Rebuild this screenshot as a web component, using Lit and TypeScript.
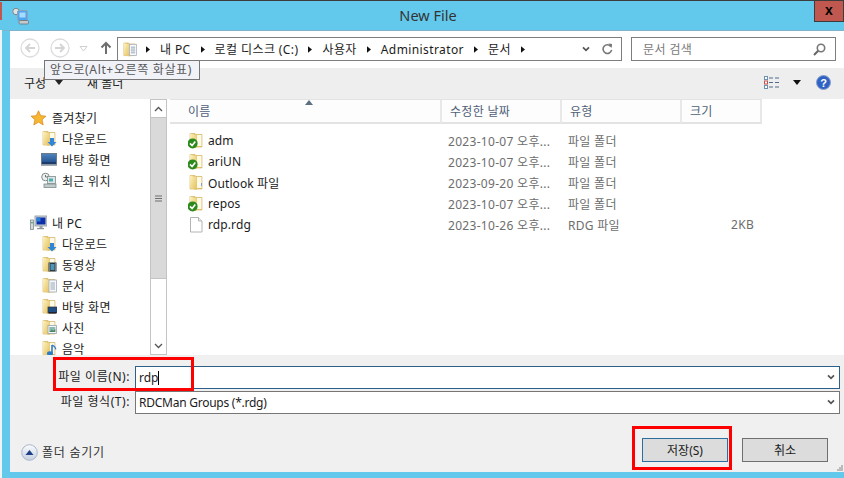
import { LitElement, html, css, svg } from "lit";
import { customElement } from "lit/decorators.js";

const folderBase = svg`
  <defs><linearGradient id="fg" x1="0" y1="0" x2="1" y2="1">
    <stop offset="0" stop-color="#fdf3c0"/><stop offset="1" stop-color="#e3bf5c"/></linearGradient></defs>
  <path d="M2 1.500h5l1 1h6v12.500H2z" fill="#e6c872" stroke="#cfae5c" stroke-width=".6"/>
  <rect x="9" y="3" width="4.500" height="11" fill="#fffbe8"/>
  <path d="M2 1.500l6.500 2V16L2 14.500z" fill="url(#fg)"/>
`;

const overlays: Record<string, unknown> = {
  plain: svg`<rect x="13" y="9" width="1" height="3" fill="#6aa7e0"/>`,
  check: svg`<circle cx="4.600" cy="11.400" r="5" fill="#2c8a1c"/><path d="M2 11.400l2.100 2.200 3.200-4" fill="none" stroke="#fff" stroke-width="1.600"/>`,
  down: svg`<path d="M9 8h4v4h2.500L11 16.500 6.500 12H9z" fill="#2f86d8"/>`,
  film: svg`<rect x="7.500" y="6.500" width="8" height="9" fill="#2b3a44"/><rect x="9.500" y="8" width="4" height="6" fill="#4f93b8"/><path d="M8 8h1M8 10h1M8 12h1M8 14h1M14 8h1M14 10h1M14 12h1M14 14h1" stroke="#e8e8e8" stroke-width=".8"/>`,
  doc: svg`<rect x="8" y="3" width="7.500" height="12" fill="#f6f8fb" stroke="#a5adb5" stroke-width=".8"/><path d="M9.500 6h4.500M9.500 8h4.500M9.500 10h4.500M9.500 12h4.500" stroke="#7e93a8" stroke-width=".8"/>`,
  desk: svg`<rect x="7" y="9" width="9" height="6" fill="#1e4e86" stroke="#333" stroke-width=".7"/><rect x="8" y="14" width="7" height="1.500" fill="#223"/>`,
  pic: svg`<rect x="7" y="6.500" width="8.500" height="8" fill="#f4f6f7" stroke="#9aa4a8" stroke-width=".8"/><rect x="8.300" y="8" width="6" height="5" fill="#8cb9b0"/><path d="M8.300 13l2.500-2.500 1.500 1.200 2-1.700V13z" fill="#4f8a66"/>`,
  music: svg`<path d="M11 5v8.200" stroke="#2a7cc7" stroke-width="1.600"/><path d="M11 5c2 1 3.800 2.400 3.800 4.600" fill="none" stroke="#2a7cc7" stroke-width="1.200"/><ellipse cx="9" cy="13.500" rx="3" ry="2.300" fill="#2a7cc7"/>`,
};

const folder = (o: string) => html`<svg class="ic" viewBox="0 0 16 17">${folderBase}${overlays[o]}</svg>`;

const star = html`<svg class="ic lg" viewBox="0 0 16 16"><path d="M8 .8l2.200 4.900 5.200.5-3.900 3.500 1.200 5.200L8 12.100l-4.700 2.800 1.200-5.200L.6 6.200l5.200-.5z" fill="#f7b731" stroke="#d98a1c" stroke-width=".8"/></svg>`;
const desktop = html`<svg class="ic" viewBox="0 0 16 16"><defs><linearGradient id="dg" x1="0" y1="0" x2="0" y2="1"><stop offset="0" stop-color="#4f86c0"/><stop offset="1" stop-color="#1d4a88"/></linearGradient></defs><rect x=".5" y="2" width="15" height="10.500" fill="url(#dg)" stroke="#6d7a88"/><rect x="1" y="10.800" width="14" height="1.500" fill="#16335f"/><rect x="0" y="12.800" width="16" height="1.400" fill="#7b8794"/></svg>`;
const recent = html`<svg class="ic" viewBox="0 0 16 16"><circle cx="4.500" cy="4.500" r="3.800" fill="#eef0f0" stroke="#7d8a8c"/><path d="M4.500 2.500v2h1.800" fill="none" stroke="#555" stroke-width=".8"/><rect x="6.500" y="4" width="8" height="7" fill="#dfe5e6" stroke="#7d8a8c" stroke-width=".8"/><rect x="8" y="6" width="4" height="3" fill="#4ab1ac"/><rect x="3" y="11.500" width="12" height="3.500" fill="#c3cacb" stroke="#7d8a8c" stroke-width=".8"/></svg>`;
const pc = html`<svg class="ic lg" viewBox="0 0 17 16"><rect x="5" y="1" width="12" height="10" fill="#cfd6da" stroke="#8b9498" stroke-width=".8"/><rect x="6.500" y="2.500" width="9" height="7" fill="#0f2fa8"/><rect x="6.500" y="2.500" width="4" height="4" fill="#2b7fd8"/><rect x="9.500" y="11" width="3" height="2" fill="#9aa2a6"/><rect x="7" y="13" width="7" height="1.200" fill="#8b9498"/><rect x=".5" y="5" width="3" height="9.500" fill="#d5dadb" stroke="#818a8d" stroke-width=".8"/><rect x="1.300" y="7" width="1.400" height="1.400" fill="#37a24a"/></svg>`;
const fileIc = html`<svg class="ic" viewBox="0 0 16 17"><path d="M2.500 1.500h8l3.500 3.500v11H2.500z" fill="#fff" stroke="#b4b4b4"/><path d="M10.500 1.500V5H14" fill="#f0f0f0" stroke="#b4b4b4"/></svg>`;
const chevDown = html`<svg class="chev" viewBox="0 0 9 7"><path d="M1 1.500l3.500 3.500L8 1.500" fill="none" stroke="#555" stroke-width="2"/></svg>`;
const triR = html`<svg class="tri" viewBox="0 0 5 8"><path d="M0 0l5 4-5 4z" fill="#111"/></svg>`;
const navCircle = (flip: boolean) => html`<svg class="${flip ? "navc fwd" : "navc"}" viewBox="0 0 20 20"><circle cx="10" cy="10" r="9" fill="#fff" stroke="#dcdcdc" stroke-width="1.300"/><path d="${flip ? "M5 10h8M10 6l4 4-4 4" : "M15 10H7M10 6l-4 4 4 4"}" fill="none" stroke="#d4d4d4" stroke-width="1.800"/></svg>`;

const favs = [["down", "다운로드"], ["desk", "바탕 화면"]];
const pcs = [["down", "다운로드"], ["film", "동영상"], ["doc", "문서"], ["desk", "바탕 화면"], ["pic", "사진"], ["music", "음악"]];
const files = [
  ["check", "adm", "2023-10-07 오후...", "파일 폴더", ""],
  ["check", "ariUN", "2023-10-07 오후...", "파일 폴더", ""],
  ["plain", "Outlook 파일", "2023-09-20 오후...", "파일 폴더", ""],
  ["check", "repos", "2023-10-07 오후...", "파일 폴더", ""],
  ["file", "rdp.rdg", "2023-10-26 오후...", "RDG 파일", "2KB"],
];

@customElement("app-root")
export class AppRoot extends LitElement {
  static styles = css`
    :host { display: block; width: 844px; height: 478px; position: relative; overflow: hidden; background: #63c9ec;
      font: 12px "Noto Sans", "Noto Sans CJK KR", sans-serif; color: #1b1b1b; }
    * { box-sizing: border-box; }
    svg { display: block; flex: none; }
    .edge { position: absolute; left: 0; top: 30px; bottom: 0; width: 2px; background: #eef3f5; }
    .edgeRed { position: absolute; left: 0; top: 2px; height: 18px; width: 2px; background: #c0584f; }
    .title { height: 31px; display: grid; grid-template-columns: 1fr auto 1fr; padding-left: 12px; border-top: 1px solid #3c3c3c; border-bottom: 1px solid #7fb4cc; }
    .appic { width: 17px; height: 17px; margin-top: 7px; }
    .caption { font-size: 14.5px; line-height: 29px; color: #333; }
    .close { justify-self: end; width: 30px; height: 21px; background: #c0584f; border: 1px solid #3c3c3c; border-top: 0; color: #000; font: bold 14px/18px "Liberation Sans", sans-serif; text-align: center; }
    .body { margin-left: 10px; height: 441px; background: #fff; display: flex; flex-direction: column; }
    .nav { height: 37px; display: flex; align-items: flex-start; padding: 6px 8px 0 10px; }
    .navc { width: 20px; height: 20px; margin-top: 1px; }
    .navc.fwd { margin-left: 10px; }
    .drop { width: 9px; height: 6px; margin: 9px 0 0 9px; }
    .up { width: 12px; height: 14px; margin: 4px 0 0 12px; }
    .addr { margin-left: 5px; width: 505px; height: 24px; border: 1px solid #7e7e7e; display: flex; align-items: center; padding: 0 8px 0 4px; }
    .addr .crumb { display: flex; align-items: center; gap: 10px; margin-left: 9px; white-space: nowrap; letter-spacing: .4px; }
    .addr .spacer { flex: 1; }
    .addr .ic { width: 15px; height: 17px; }
    .tri { width: 4px; height: 7px; }
    .chev { width: 8px; height: 6px; }
    .refresh { width: 11px; height: 12px; margin-left: 12px; }
    .search { margin-left: 9px; width: 205px; height: 24px; border: 1px solid #7e7e7e; display: flex; align-items: center; justify-content: space-between; padding: 0 9px 0 11px; color: #7a7a7a; letter-spacing: .4px; white-space: nowrap; }
    .search svg { width: 13px; height: 13px; }
    .cmd { height: 31px; background: #eee; display: flex; align-items: center; padding: 0 13px 2px 14px; }
    .cmd .cfg { width: 63px; display: flex; align-items: center; gap: 9px; }
    .cmd .cfg svg { width: 8px; height: 5px; }
    .cmd .gap { flex: 1; }
    .cmd .views { width: 16px; height: 13px; }
    .cmd .viewdrop { width: 8px; height: 5px; margin: 0 15px 0 13px; }
    .cmd .help { width: 15px; height: 15px; }
    .main { height: 256px; display: flex; overflow: hidden; }
    .tree { width: 140px; padding-top: 8px; }
    .row { height: 21px; display: flex; align-items: center; white-space: nowrap; letter-spacing: .3px; }
    .row.top { padding-left: 20px; gap: 5px; }
    .row.sub { padding-left: 31px; gap: 5px; }
    .row.blank { height: 21px; }
    .ic { width: 16px; height: 17px; }
    .ic.lg { width: 17px; height: 16px; }
    .sb { width: 17px; display: flex; flex-direction: column; border: 1px solid #c4c4c4; }
    .sb .btn { height: 17px; display: flex; align-items: center; justify-content: center; }
    .sb .btn svg { width: 9px; height: 6px; }
    .sb .thumb { height: 162px; background: #d9d9d9; border: solid #c4c4c4; border-width: 1px 0; display: flex; align-items: center; justify-content: center; }
    .sb .thumb svg { width: 7px; height: 7px; }
    .sb .track { flex: 1; }
    .list { flex: 1; padding-left: 3px; }
    .head { width: 592px; height: 25px; display: grid; grid-template-columns: 272px 120px 120px 80px; position: relative; border: solid #e3e3e3; border-width: 1px 0 2px; background: #fdfdfd; color: #4d6078; letter-spacing: .3px; }
    .head span { line-height: 23px; padding-left: 8px; border-right: 2px solid #e8e8e8; }
    .head span:first-child { padding-left: 18px; }
    .sort { position: absolute; left: 135px; top: 0; width: 8px; height: 5px; }
    .rows { padding-top: 6px; }
    .file { height: 21px; display: grid; grid-template-columns: 271px 120px 120px 73px; align-items: center; width: 592px; color: #6d6d6d; letter-spacing: .3px; }
    .file .name { display: flex; align-items: center; gap: 4px; padding-left: 18px; color: #1b1b1b; letter-spacing: .1px; }
    .file .date { padding-left: 7px; }
    .file .type { padding-left: 7px; }
    .file .size { text-align: right; }
    .bottom { flex: 1; background: #f0f0f0; display: flex; flex-direction: column; padding: 10px 4px 0 0; position: relative; }
    .field { display: grid; grid-template-columns: 125px 1fr; align-items: center; height: 23px; margin-bottom: 2px; }
    .field label { text-align: right; padding-right: 5px; letter-spacing: .55px; line-height: 24px; }
    .box { height: 23px; background: #fff; border: 1px solid #767676; display: flex; align-items: center; justify-content: space-between; padding: 0 4px 0 3px; }
    .box.act { border-color: #2c6088; }
    .box .tx { letter-spacing: -.25px; }
    .box .caret { display: inline-block; width: 1px; height: 14px; background: #000; vertical-align: -3px; }
    .foot { flex: 1; display: flex; align-items: flex-start; justify-content: space-between; padding: 23px 12px 0 11px; }
    .hide { display: flex; align-items: center; gap: 4px; margin-top: 5px; letter-spacing: .75px; color: #333; }
    .hide svg { width: 17px; height: 17px; }
    .btns { display: flex; gap: 14px; }
    button { width: 86px; height: 24px; background: #dcdcdc; border: 1px solid #707070; font: inherit; color: #1b1b1b; padding: 0; }
    button.def { border-color: #2c6f9f; }
    .grip { position: absolute; right: 1px; bottom: 1px; width: 6px; height: 6px; }
    .tooltip { position: absolute; left: 44px; top: 60px; width: 156px; height: 20px; background: #f1f2f7; border: 1px solid #767676; color: #575757; line-height: 17px; padding-left: 5px; letter-spacing: .65px; white-space: nowrap; }
    .mark { position: absolute; border: 3px solid #f00; }
    .mark.a { left: 53px; top: 357px; width: 141px; height: 34px; }
    .mark.b { left: 632px; top: 426px; width: 100px; height: 44px; }
  `;

  render() {
    return html`
      <div class="edge"></div>
      <div class="edgeRed"></div>
      <div class="title">
        <svg class="appic" viewBox="0 0 17 17">
          <circle cx="4" cy="3.500" r="3.200" fill="#dfe3e6" stroke="#7d8488"/>
          <rect x="5.500" y="2.500" width="10" height="10" rx="1.500" fill="#4ea6f0" stroke="#8fa3b5"/>
          <rect x="7.500" y="4.500" width="6" height="5" fill="#a8dcff"/>
          <rect x="7" y="12.500" width="9.500" height="3.500" rx="1.200" fill="#c4cbd0" stroke="#60686e" stroke-width=".7"/>
        </svg>
        <div class="caption">New File</div>
        <div class="close">x</div>
      </div>
      <div class="body">
        <div class="nav">
          ${navCircle(false)}
          ${navCircle(true)}
          <svg class="drop" viewBox="0 0 9 6"><path d="M1 .5h7L4.500 5z" fill="#fff" stroke="#cfcfcf"/></svg>
          <svg class="up" viewBox="0 0 12 14"><path d="M6 13V2M1.500 6.500L6 2l4.500 4.500" fill="none" stroke="#6e6e6e" stroke-width="2"/></svg>
          <div class="addr">
            ${folder("doc")}
            <div class="crumb">${triR}<span>내 PC</span>${triR}<span>로컬 디스크 (C:)</span>${triR}<span>사용자</span>${triR}<span>Administrator</span>${triR}<span>문서</span>${triR}</div>
            <div class="spacer"></div>
            ${chevDown}
            <svg class="refresh" viewBox="0 0 12 12"><path d="M9.800 3.500A4.700 4.700 0 1 0 10.500 7" fill="none" stroke="#777" stroke-width="1.700"/><path d="M7 0l4 .5L10.500 5z" fill="#777"/></svg>
          </div>
          <div class="search"><span>문서 검색</span>
            <svg viewBox="0 0 13 13"><circle cx="8" cy="5" r="3.700" fill="none" stroke="#777" stroke-width="1.600"/><path d="M5.200 7.800L1 12" stroke="#666" stroke-width="2"/></svg>
          </div>
        </div>
        <div class="cmd">
          <div class="cfg"><span>구성</span><svg viewBox="0 0 8 5"><path d="M0 0h8L4 5z" fill="#222"/></svg></div>
          <span>새 폴더</span>
          <div class="gap"></div>
          <svg class="views" viewBox="0 0 16 13"><rect x=".5" y=".5" width="3" height="3" fill="#fff" stroke="#6f8fb0"/><rect x=".5" y="5" width="3" height="3" fill="#fff" stroke="#c0504d"/><rect x=".5" y="9.500" width="3" height="3" fill="#fff" stroke="#6f8fb0"/><path d="M5 2h4M11 2h4M5 6.500h4M11 6.500h4M5 11h4M11 11h4" stroke="#4f6a8c"/></svg>
          <svg class="viewdrop" viewBox="0 0 8 5"><path d="M0 0h8L4 5z" fill="#111"/></svg>
          <svg class="help" viewBox="0 0 15 15"><circle cx="7.500" cy="7.500" r="7" fill="#2f62c4" stroke="#8ba2c8"/><text x="7.500" y="11.500" text-anchor="middle" font-family="Liberation Sans" font-weight="bold" font-size="11" fill="#fff">?</text></svg>
        </div>
        <div class="main">
          <div class="tree">
            <div class="row top">${star}<span>즐겨찾기</span></div>
            ${favs.map(([i, t]) => html`<div class="row sub">${i === "desk" ? desktop : folder(i)}<span>${t}</span></div>`)}
            <div class="row sub">${recent}<span>최근 위치</span></div>
            <div class="row blank"></div>
            <div class="row top">${pc}<span>내 PC</span></div>
            ${pcs.map(([i, t]) => html`<div class="row sub">${folder(i)}<span>${t}</span></div>`)}
          </div>
          <div class="sb">
            <div class="btn"><svg viewBox="0 0 9 6"><path d="M1 5l3.500-3.500L8 5" fill="none" stroke="#555" stroke-width="1.300"/></svg></div>
            <div class="thumb"><svg viewBox="0 0 7 7"><path d="M0 1h7M0 3.500h7M0 6h7" stroke="#6e6e6e" stroke-width="1.200"/></svg></div>
            <div class="track"></div>
            <div class="btn"><svg viewBox="0 0 9 6"><path d="M1 1l3.500 3.500L8 1" fill="none" stroke="#555" stroke-width="1.300"/></svg></div>
          </div>
          <div class="list">
            <div class="head">
              <span>이름</span><span>수정한 날짜</span><span>유형</span><span>크기</span>
              <svg class="sort" viewBox="0 0 8 5"><path d="M0 5l4-5 4 5z" fill="#5c6e80"/></svg>
            </div>
            <div class="rows">
              ${files.map(([i, n, d, t, s]) => html`
                <div class="file">
                  <div class="name">${i === "file" ? fileIc : folder(i)}<span>${n}</span></div>
                  <div class="date">${d}</div><div class="type">${t}</div><div class="size">${s}</div>
                </div>`)}
            </div>
          </div>
        </div>
        <div class="bottom">
          <div class="field"><label>파일 이름(N):</label><div class="box act"><span>rdp<span class="caret"></span></span>${chevDown}</div></div>
          <div class="field"><label>파일 형식(T):</label><div class="box"><span class="tx">RDCMan Groups (*.rdg)</span>${chevDown}</div></div>
          <div class="foot">
            <div class="hide">
              <svg viewBox="0 0 17 17"><defs><linearGradient id="hg" x1="0" y1="0" x2="0" y2="1"><stop offset="0" stop-color="#fbfcfe"/><stop offset="1" stop-color="#c5d0e2"/></linearGradient></defs><circle cx="8.500" cy="8.500" r="7.800" fill="url(#hg)" stroke="#a9b5c9"/><path d="M4.500 11l4-5 4 5z" fill="#1f3f86"/></svg>
              <span>폴더 숨기기</span>
            </div>
            <div class="btns"><button class="def">저장(S)</button><button>취소</button></div>
          </div>
          <svg class="grip" viewBox="0 0 6 6"><path d="M4 0h2v2H4zM2 2h2v2H2zM4 2h2v2H4zM0 4h2v2H0zM2 4h2v2H2zM4 4h2v2H4z" fill="#bbb"/></svg>
        </div>
      </div>
      <div class="tooltip">앞으로(Alt+오른쪽 화살표)</div>
      <div class="mark a"></div>
      <div class="mark b"></div>
    `;
  }
}
